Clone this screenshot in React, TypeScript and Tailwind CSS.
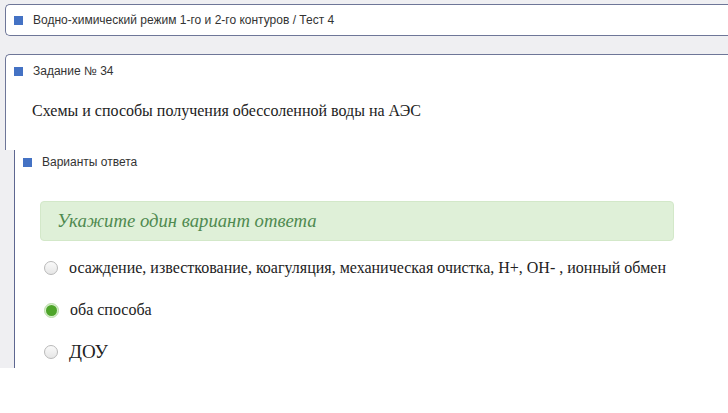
import React from 'react'

const sans = { fontFamily: '"Liberation Sans", Arial, sans-serif' }
const serif = { fontFamily: '"Liberation Serif", "Times New Roman", serif' }

function Marker() {
  return <span className="block w-[9px] h-[9px] bg-[#4472c4] shrink-0" />
}

function Radio({ checked }: { checked?: boolean }) {
  if (checked) {
    return (
      <span className="flex items-center justify-center w-[15px] h-[15px] rounded-full bg-[#d9efcf] border border-[#b9dca8] shrink-0">
        <span className="block w-[11px] h-[11px] rounded-full bg-[#4ea52a]" />
      </span>
    )
  }
  return (
    <span className="block w-[14px] h-[14px] rounded-full border border-[#b9b9b9] bg-gradient-to-b from-[#fafafa] to-[#e6e6e6] shrink-0" />
  )
}

const answers = [
  { text: 'осаждение, известкование, коагуляция, механическая очистка, Н+, ОН- , ионный обмен', size: 'text-[16px]' },
  { text: 'оба способа', size: 'text-[16px]', checked: true },
  { text: 'ДОУ', size: 'text-[19px]' },
]

export default function App() {
  return (
    <div className="w-[728px] h-[413px] overflow-hidden bg-white">
      <div className="bg-[#efeff2] pt-[4px] h-[368px] flex flex-col">
        {/* breadcrumb */}
        <div className="ml-[5px] h-[32px] border border-r-0 border-[#6e7698] rounded-l-[5px] bg-white flex items-center pl-[8px] gap-[10px]">
          <Marker />
          <span className="text-[12px] text-[#333]" style={sans}>
            Водно-химический режим 1-го и 2-го контуров / Тест 4
          </span>
        </div>

        {/* task card */}
        <div className="ml-[5px] mt-[18px] h-[96px] border-t border-l border-[#6e7698] rounded-tl-[5px] bg-white shrink-0">
          <div className="flex items-center pl-[8px] gap-[10px] pt-[7px]">
            <Marker />
            <span className="text-[12px] text-[#333]" style={sans}>Задание № 34</span>
          </div>
          <p className="pl-[26px] mt-[19px] text-[16px] text-[#222]" style={serif}>
            Схемы и способы получения обессоленной воды на АЭС
          </p>
        </div>

        {/* answers panel */}
        <div className="ml-[14px] flex-1 border-l border-[#5d6690] bg-white">
          <div className="flex items-center pl-[8px] gap-[10px] pt-[3px]">
            <Marker />
            <span className="text-[12px] text-[#333]" style={sans}>Варианты ответа</span>
          </div>
          <div className="ml-[25px] w-[634px] mt-[30px] h-[40px] rounded-[4px] bg-[#dff0d8] border border-[#d3e8c9] flex items-center pl-[16px]">
            <span className="italic text-[18.7px] text-[#4f8a50]" style={serif}>Укажите один вариант ответа</span>
          </div>
          <div className="mt-[16px] flex flex-col gap-[20px] pl-[29px]">
            {answers.map((a) => (
              <div key={a.text} className="flex items-center gap-[11px] h-[22px]">
                <Radio checked={a.checked} />
                <span className={`${a.size} text-[#222] whitespace-nowrap`} style={serif}>{a.text}</span>
              </div>
            ))}
          </div>
        </div>
      </div>
    </div>
  )
}
